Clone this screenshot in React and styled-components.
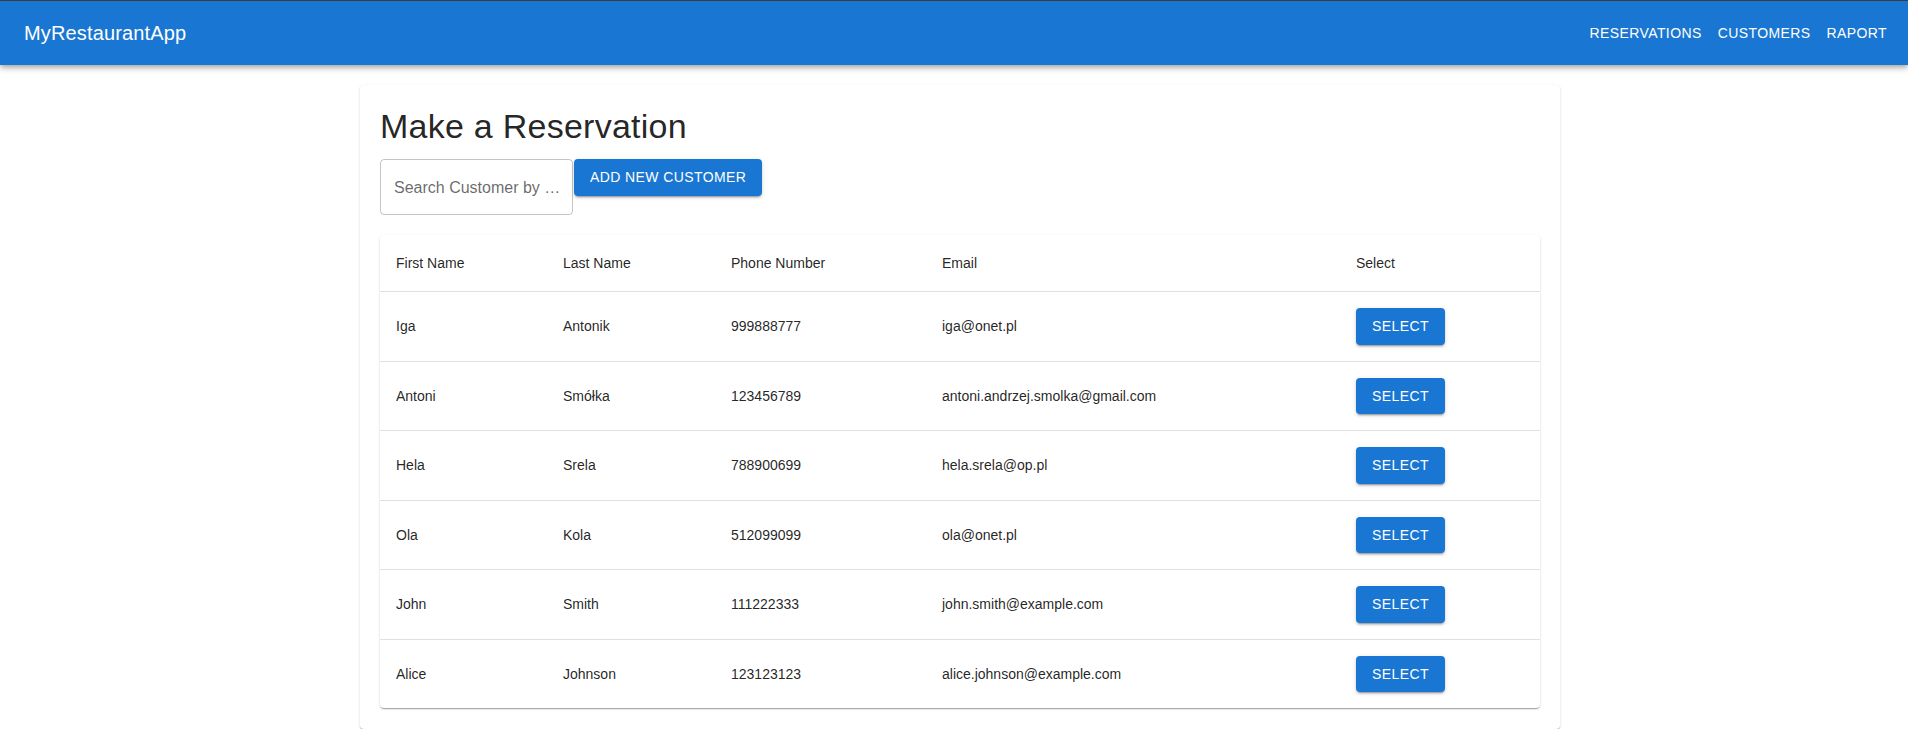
import React from "react";
import styled, { createGlobalStyle } from "styled-components";

const GlobalStyle = createGlobalStyle`
  * { box-sizing: border-box; }
  html, body {
    margin: 0;
    padding: 0;
    background: #fff;
    font-family: "Liberation Sans", Arial, Helvetica, sans-serif;
    color: rgba(0, 0, 0, 0.87);
  }
`;

const customers = [
  { first: "Iga", last: "Antonik", phone: "999888777", email: "iga@onet.pl" },
  { first: "Antoni", last: "Smółka", phone: "123456789", email: "antoni.andrzej.smolka@gmail.com" },
  { first: "Hela", last: "Srela", phone: "788900699", email: "hela.srela@op.pl" },
  { first: "Ola", last: "Kola", phone: "512099099", email: "ola@onet.pl" },
  { first: "John", last: "Smith", phone: "111222333", email: "john.smith@example.com" },
  { first: "Alice", last: "Johnson", phone: "123123123", email: "alice.johnson@example.com" },
];

const columns = [
  { label: "First Name", width: 167 },
  { label: "Last Name", width: 168 },
  { label: "Phone Number", width: 211 },
  { label: "Email", width: 414 },
  { label: "Select", width: 200 },
];

const App = () => {
  return (
    <>
      <GlobalStyle />
      <AppBar>
        <Brand>MyRestaurantApp</Brand>
        <Nav>
          <NavButton>Reservations</NavButton>
          <NavButton>Customers</NavButton>
          <NavButton>Raport</NavButton>
        </Nav>
      </AppBar>

      <Main>
        <Card>
          <Title>Make a Reservation</Title>
          <ActionRow>
            <SearchField>
              <SearchLabel>Search Customer by …</SearchLabel>
            </SearchField>
            <Button>Add New Customer</Button>
          </ActionRow>

          <TablePaper>
            <Table>
              <colgroup>
                {columns.map((c) => (
                  <col key={c.label} style={{ width: c.width }} />
                ))}
              </colgroup>
              <thead>
                <tr>
                  {columns.map((c) => (
                    <HeadCell key={c.label}>{c.label}</HeadCell>
                  ))}
                </tr>
              </thead>
              <tbody>
                {customers.map((c, i) => (
                  <Row key={c.phone} $last={i === customers.length - 1}>
                    <Cell>{c.first}</Cell>
                    <Cell>{c.last}</Cell>
                    <Cell>{c.phone}</Cell>
                    <Cell>{c.email}</Cell>
                    <Cell>
                      <Button>Select</Button>
                    </Cell>
                  </Row>
                ))}
              </tbody>
            </Table>
          </TablePaper>
        </Card>
      </Main>
    </>
  );
};

const AppBar = styled.header`
  display: flex;
  align-items: center;
  justify-content: space-between;
  height: 65px;
  padding: 0 13px 0 24px;
  background: #1976d2;
  border-top: 1px solid #3d3d3d;
  color: #fff;
  box-shadow: 0px 2px 4px -1px rgba(0, 0, 0, 0.2),
    0px 4px 5px 0px rgba(0, 0, 0, 0.14), 0px 1px 10px 0px rgba(0, 0, 0, 0.12);
  position: relative;
  z-index: 2;
`;

const Brand = styled.div`
  font-size: 20px;
  line-height: 1.6;
  letter-spacing: 0.15px;
`;

const Nav = styled.nav`
  display: flex;
  align-items: center;
`;

const NavButton = styled.button`
  border: 0;
  background: transparent;
  color: #fff;
  font-family: inherit;
  font-size: 14px;
  line-height: 1.75;
  letter-spacing: 0.4px;
  text-transform: uppercase;
  padding: 6px 8px;
  border-radius: 4px;
  cursor: pointer;
`;

const Main = styled.main`
  display: flex;
  justify-content: center;
  padding: 20px 0 0 12px;
`;

const Card = styled.section`
  width: 1200px;
  padding: 20px 20px 21px;
  background: #fff;
  border-radius: 4px;
  box-shadow: 0px 2px 1px -1px rgba(0, 0, 0, 0.2),
    0px 1px 1px 0px rgba(0, 0, 0, 0.14), 0px 1px 3px 0px rgba(0, 0, 0, 0.12);
`;

const Title = styled.h1`
  margin: 0 0 12px;
  font-size: 34px;
  font-weight: 400;
  line-height: 42px;
  letter-spacing: 0.25px;
  color: rgba(0, 0, 0, 0.87);
`;

const ActionRow = styled.div`
  display: flex;
  align-items: flex-start;
  gap: 1px;
`;

const SearchField = styled.div`
  width: 193px;
  height: 56px;
  border: 1px solid rgba(0, 0, 0, 0.23);
  border-radius: 4px;
  display: flex;
  align-items: center;
  padding: 0 10px 0 13px;
`;

const SearchLabel = styled.span`
  font-size: 16px;
  line-height: 23px;
  color: rgba(0, 0, 0, 0.6);
  white-space: nowrap;
`;

const Button = styled.button`
  border: 0;
  border-radius: 4px;
  background: #1976d2;
  color: #fff;
  font-family: inherit;
  font-size: 14px;
  line-height: 24.5px;
  letter-spacing: 0.4px;
  text-transform: uppercase;
  padding: 6px 16px;
  cursor: pointer;
  white-space: nowrap;
  box-shadow: 0px 3px 1px -2px rgba(0, 0, 0, 0.2),
    0px 2px 2px 0px rgba(0, 0, 0, 0.14), 0px 1px 5px 0px rgba(0, 0, 0, 0.12);
`;

const TablePaper = styled.div`
  margin-top: 20px;
  border-radius: 4px;
  overflow: hidden;
  background: #fff;
  box-shadow: 0px 2px 1px -1px rgba(0, 0, 0, 0.2),
    0px 1px 1px 0px rgba(0, 0, 0, 0.14), 0px 1px 3px 0px rgba(0, 0, 0, 0.12);
`;

const Table = styled.table`
  width: 100%;
  border-collapse: collapse;
  table-layout: fixed;
`;

const HeadCell = styled.th`
  text-align: left;
  font-weight: 400;
  font-size: 14px;
  line-height: 24px;
  padding: 16px;
  color: rgba(0, 0, 0, 0.87);
  border-bottom: 1px solid rgba(224, 224, 224, 1);
`;

const Row = styled.tr`
  border-bottom: ${({ $last }) => ($last ? "0" : "1px solid rgba(224, 224, 224, 1)")};
`;

const Cell = styled.td`
  font-size: 14px;
  line-height: 24px;
  padding: 16px;
  height: 69px;
  color: rgba(0, 0, 0, 0.87);
`;

export default App;
